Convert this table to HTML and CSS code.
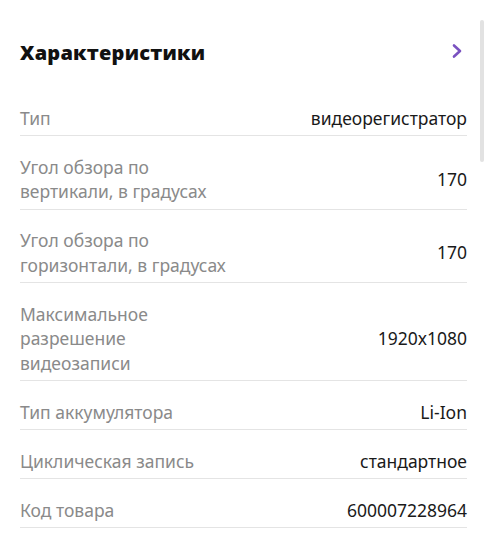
FILE: index.html
```html
<!DOCTYPE html>
<html lang="ru">
<head>
<meta charset="utf-8">
<link rel="stylesheet" href="styles.css">
</head>
<body>
<div class="page">
  <section class="specs">
    <header class="specs-head">
      <h2 class="specs-title">Характеристики</h2>
      <svg class="chev" width="12" height="16" viewBox="0 0 12 16"><path d="M3 2.5 L9 8 L3 13.5" fill="none" stroke="#7a52c0" stroke-width="2.6" stroke-linecap="round" stroke-linejoin="round"/></svg>
    </header>
    <ul class="rows">
      <li class="row"><span class="label">Тип</span><span class="value">видеорегистратор</span></li>
      <li class="row"><span class="label">Угол обзора по вертикали, в градусах</span><span class="value">170</span></li>
      <li class="row"><span class="label">Угол обзора по горизонтали, в градусах</span><span class="value">170</span></li>
      <li class="row"><span class="label">Максимальное разрешение видеозаписи</span><span class="value">1920x1080</span></li>
      <li class="row"><span class="label">Тип аккумулятора</span><span class="value">Li-Ion</span></li>
      <li class="row"><span class="label">Циклическая запись</span><span class="value">стандартное</span></li>
      <li class="row"><span class="label">Код товара</span><span class="value">600007228964</span></li>
    </ul>
  </section>
  <div class="scrollbar"><div class="thumb"></div></div>
</div>
</body>
</html>
```
FILE: styles.css
```css
html, body { margin: 0; padding: 0; background: #fff; }
body { font-family: "Noto Sans", "Open Sans", sans-serif; color: #1a1a1a; }
.page { position: relative; width: 488px; height: 540px; overflow: hidden; }
.specs { padding: 0 21px 0 20px; }
.specs-head { display: flex; align-items: center; justify-content: space-between; height: 46px; padding-top: 29px; padding-bottom: 12px; }
.specs-title { margin: 0; font-family: "Open Sans", sans-serif; font-weight: 800; font-size: 20px; letter-spacing: 0.2px; color: #111; }
.chev { margin-right: 4px; margin-top: -2px; }
.rows { list-style: none; margin: 0; padding: 0; }
.row { display: flex; justify-content: space-between; align-items: center; padding: 18.5px 0 5px; border-bottom: 1px solid #e4e4e4; font-size: 17.5px; line-height: 24.5px; }
.label { color: #8a8a8a; width: 212px; }
.value { color: #1a1a1a; text-align: right; }
.scrollbar { position: absolute; top: 20px; right: 4px; width: 4px; height: 142px; }
.thumb { width: 100%; height: 100%; background: #e2e2e2; border-radius: 2px; }
```
